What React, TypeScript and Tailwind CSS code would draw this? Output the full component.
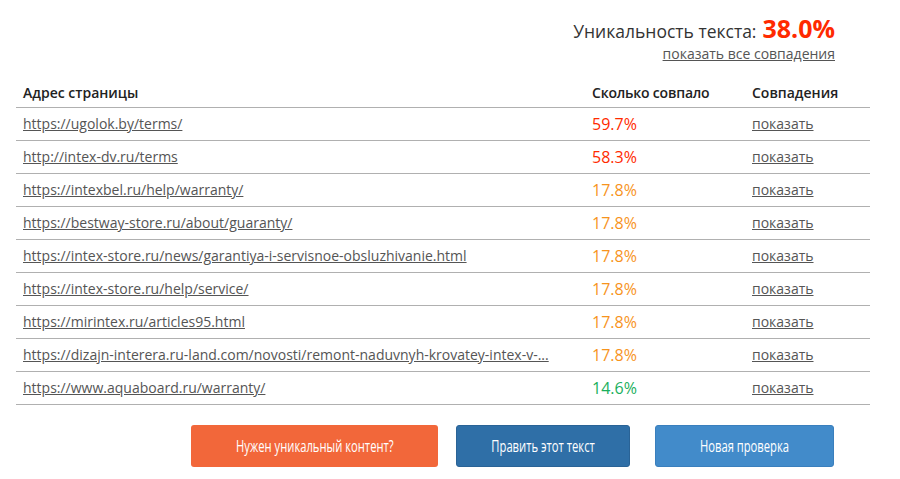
const ROWS = [
  { url: "https://ugolok.by/terms/", pct: "59.7%", color: "text-[#ff2a00]" },
  { url: "http://intex-dv.ru/terms", pct: "58.3%", color: "text-[#ff2a00]" },
  { url: "https://intexbel.ru/help/warranty/", pct: "17.8%", color: "text-[#f7941d]" },
  { url: "https://bestway-store.ru/about/guaranty/", pct: "17.8%", color: "text-[#f7941d]" },
  { url: "https://intex-store.ru/news/garantiya-i-servisnoe-obsluzhivanie.html", pct: "17.8%", color: "text-[#f7941d]" },
  { url: "https://intex-store.ru/help/service/", pct: "17.8%", color: "text-[#f7941d]" },
  { url: "https://mirintex.ru/articles95.html", pct: "17.8%", color: "text-[#f7941d]" },
  { url: "https://dizajn-interera.ru-land.com/novosti/remont-naduvnyh-krovatey-intex-v-...", pct: "17.8%", color: "text-[#f7941d]" },
  { url: "https://www.aquaboard.ru/warranty/", pct: "14.6%", color: "text-[#1aaf5d]" },
];

export default function App() {
  return (
    <div className="w-[900px] h-[479px] bg-white font-['Open_Sans',sans-serif] text-[#333]">
      <div className="ml-4 w-[854px] pt-[13px]">
        {/* uniqueness summary */}
        <div className="mr-[35px] flex flex-col items-end">
          <div className="flex items-baseline leading-[30px]">
            <span className="text-[17.5px] text-[#333]">Уникальность текста:</span>
            <span className="ml-[6px] text-[25px] font-bold text-[#ff2a00]">38.0%</span>
          </div>
          <a href="#" className="-mt-[2px] text-[14px] leading-[20px] text-[#555] underline">
            показать все совпадения
          </a>
        </div>

        {/* results table */}
        <table className="mt-[19px] w-full border-collapse text-left">
          <thead>
            <tr className="border-b border-[#b0b0b0]">
              <th className="pl-[7px] pb-[4px] text-[14px] leading-[20px] font-semibold text-[#222]">Адрес страницы</th>
              <th className="w-[160px] pb-[4px] text-[14px] leading-[20px] font-semibold text-[#222] tracking-[-0.2px]">Сколько совпало</th>
              <th className="w-[118px] pb-[4px] text-[14px] leading-[20px] font-semibold text-[#222]">Совпадения</th>
            </tr>
          </thead>
          <tbody>
            {ROWS.map((r) => (
              <tr key={r.url} className="h-[33px] border-b border-[#b0b0b0]">
                <td className="pl-[7px] text-[14px] leading-[20px]">
                  <a href="#" className="text-[#555] underline">{r.url}</a>
                </td>
                <td className={`text-[16px] leading-[20px] ${r.color}`}>{r.pct}</td>
                <td className="text-[14px] leading-[20px]">
                  <a href="#" className="text-[#555] underline">показать</a>
                </td>
              </tr>
            ))}
          </tbody>
        </table>

        {/* actions */}
        <div className="mt-[20px] flex pl-[175px]">
          <button className="flex h-[42px] w-[247px] items-center justify-center rounded-[3px] bg-[#f2673a] text-[16.5px] text-white">
            <span className="inline-block whitespace-nowrap scale-x-[0.68]">Нужен уникальный контент?</span>
          </button>
          <button className="ml-[18px] flex h-[42px] w-[174px] items-center justify-center rounded-[3px] border border-[#2a6396] bg-[#2f6fa7] text-[16.5px] text-white">
            <span className="inline-block whitespace-nowrap scale-x-[0.68]">Править этот текст</span>
          </button>
          <button className="ml-[25px] flex h-[42px] w-[179px] items-center justify-center rounded-[3px] border border-[#3a7fbd] bg-[#428bca] text-[16.5px] text-white">
            <span className="inline-block whitespace-nowrap scale-x-[0.68]">Новая проверка</span>
          </button>
        </div>
      </div>
    </div>
  );
}
